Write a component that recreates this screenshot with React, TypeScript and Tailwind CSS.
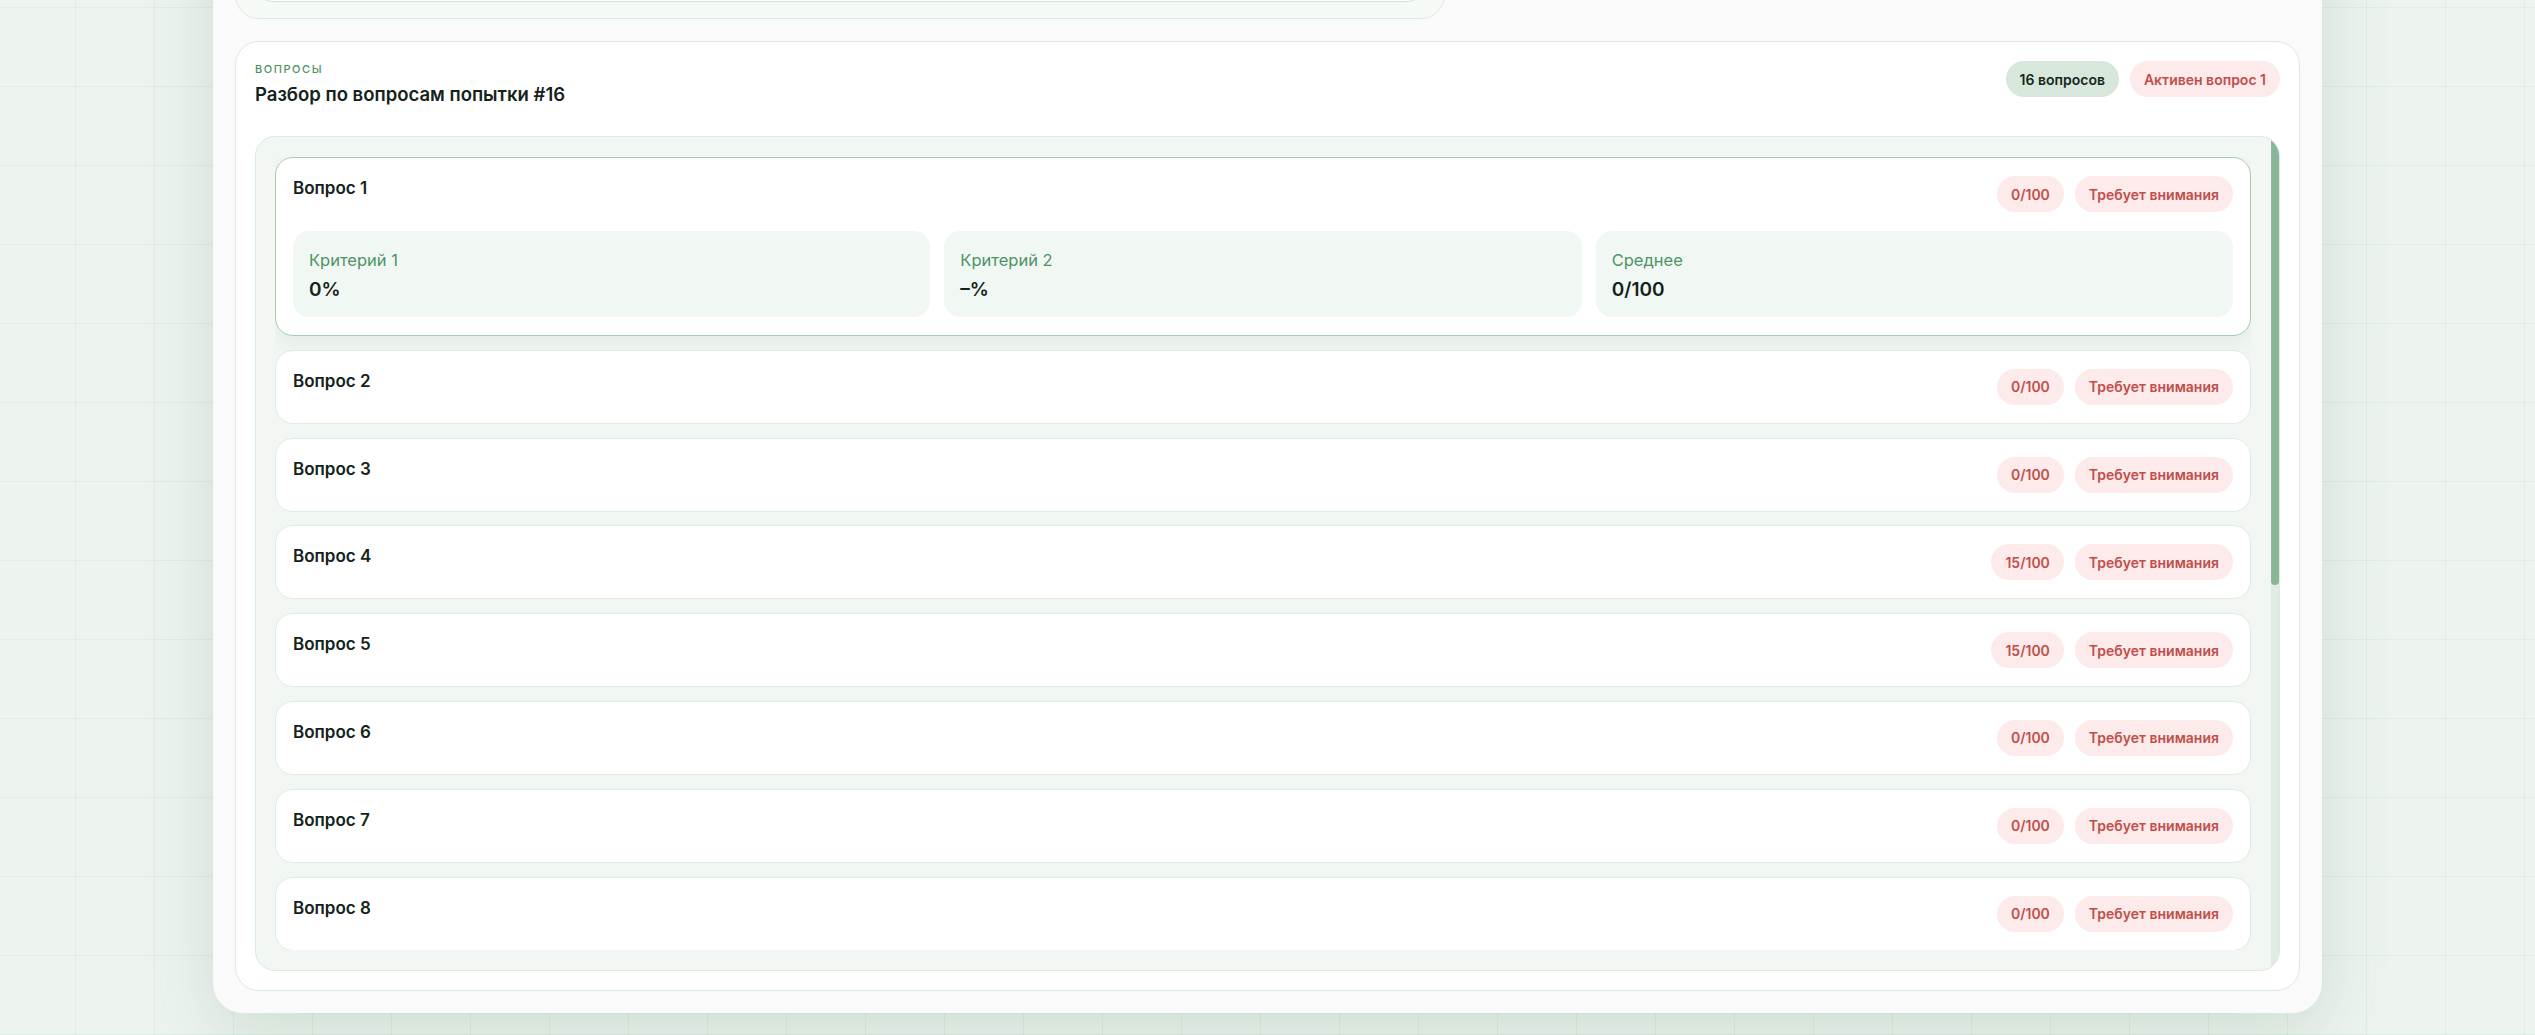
import React from 'react';

type Question = {
  id: number;
  score: number;
  criteria: { label: string; value: string }[];
};

const questions: Question[] = [
  { id: 1, score: 0, criteria: [{ label: 'Критерий 1', value: '0%' }, { label: 'Критерий 2', value: '–%' }, { label: 'Среднее', value: '0/100' }] },
  { id: 2, score: 0, criteria: [] },
  { id: 3, score: 0, criteria: [] },
  { id: 4, score: 15, criteria: [] },
  { id: 5, score: 15, criteria: [] },
  { id: 6, score: 0, criteria: [] },
  { id: 7, score: 0, criteria: [] },
  { id: 8, score: 0, criteria: [] },
  { id: 9, score: 0, criteria: [] },
  { id: 10, score: 15, criteria: [] },
  { id: 11, score: 0, criteria: [] },
  { id: 12, score: 0, criteria: [] },
  { id: 13, score: 0, criteria: [] },
  { id: 14, score: 15, criteria: [] },
  { id: 15, score: 0, criteria: [] },
  { id: 16, score: 0, criteria: [] },
];

const activeId = 1;

const Pill: React.FC<{ children: React.ReactNode; tone?: 'red' | 'green' }> = ({ children, tone = 'red' }) => (
  <span
    className={`inline-flex h-9 items-center rounded-full px-3.5 text-[14px] font-semibold whitespace-nowrap ${
      tone === 'red' ? 'bg-[#fdeaea] text-[#c04f4c]' : 'bg-[#d7e7dc] text-[#16261b]'
    }`}
  >
    {children}
  </span>
);

const QuestionRow: React.FC<{ q: Question; active: boolean }> = ({ q, active }) => (
  <div
    className={`shrink-0 rounded-[18px] border bg-white px-[17px] py-[18px] ${
      active
        ? 'border-[#a8cbb2] shadow-[0_8px_24px_rgba(50,100,70,0.08)]'
        : 'border-[#dcede2]'
    }`}
  >
    <div className="flex items-start justify-between">
      <h3 className="text-[17px] leading-6 font-semibold text-[#14231a]">Вопрос {q.id}</h3>
      <div className="flex items-center gap-[11px]">
        <Pill>{q.score}/100</Pill>
        <Pill>Требует внимания</Pill>
      </div>
    </div>

    {active && (
      <div className="mt-[19px] grid grid-cols-3 gap-3.5">
        {q.criteria.map((c) => (
          <div key={c.label} className="rounded-2xl bg-[#f1f7f3] px-4 pt-4 pb-3.5">
            <div className="text-[16.5px] leading-[26px] text-[#4e9365]">{c.label}</div>
            <div className="mt-1 text-[19px] leading-[26px] font-semibold text-[#14231a]">{c.value}</div>
          </div>
        ))}
      </div>
    )}
  </div>
);

export default function App() {
  return (
    <div
      className="min-h-screen overflow-hidden bg-[#edf4ef] bg-[linear-gradient(to_right,rgba(70,130,90,0.07)_1px,transparent_1px),linear-gradient(to_bottom,rgba(70,130,90,0.07)_1px,transparent_1px)] bg-[size:79px_79px] bg-[position:75px_7px] pb-[23px] font-['Inter',sans-serif]"
    >
      <div className="mx-[213px] -mt-[202px] flex flex-col gap-[22px] rounded-[30px] bg-[#fafafa] p-[22px] shadow-[0_20px_70px_rgba(45,100,65,0.16)]">
        {/* верхний блок попытки — на экране только его низ */}
        <div className="flex">
          <div className="w-[1210px] rounded-[24px] border border-[#d9ecdf] bg-[#f6faf7] px-[19px] pt-[19px] pb-[16px]">
            <div className="h-[162px] rounded-[18px] border border-[#d3e6d9] bg-white" />
          </div>
        </div>

        <section className="rounded-[24px] border border-[#d8ebde] bg-white p-[19px]">
          <div className="flex items-start justify-between">
            <div>
              <div className="text-[11px] leading-4 font-medium tracking-[0.14em] text-[#4e9163] uppercase">Вопросы</div>
              <h2 className="mt-[3px] text-[18.5px] leading-7 font-semibold text-[#14231a]">
                Разбор по вопросам попытки #16
              </h2>
            </div>
            <div className="flex items-center gap-[11px]">
              <Pill tone="green">{questions.length} вопросов</Pill>
              <Pill>Активен вопрос {activeId}</Pill>
            </div>
          </div>

          <div className="mt-7 flex h-[835px] overflow-hidden rounded-[20px] border border-[#d9ebdf] bg-[#f2f7f4]">
            <div className="flex min-w-0 flex-1 flex-col py-5 pr-5 pl-[19px]">
              <div className="flex min-h-0 flex-1 flex-col gap-[13.8px] overflow-hidden">
                {questions.map((q) => (
                  <QuestionRow key={q.id} q={q} active={q.id === activeId} />
                ))}
              </div>
            </div>
            {/* полоса прокрутки */}
            <div className="w-2 shrink-0 rounded-full bg-[#e0ebe3]">
              <div className="h-[448px] rounded-full bg-[#88b697]" />
            </div>
          </div>
        </section>
      </div>
    </div>
  );
}
